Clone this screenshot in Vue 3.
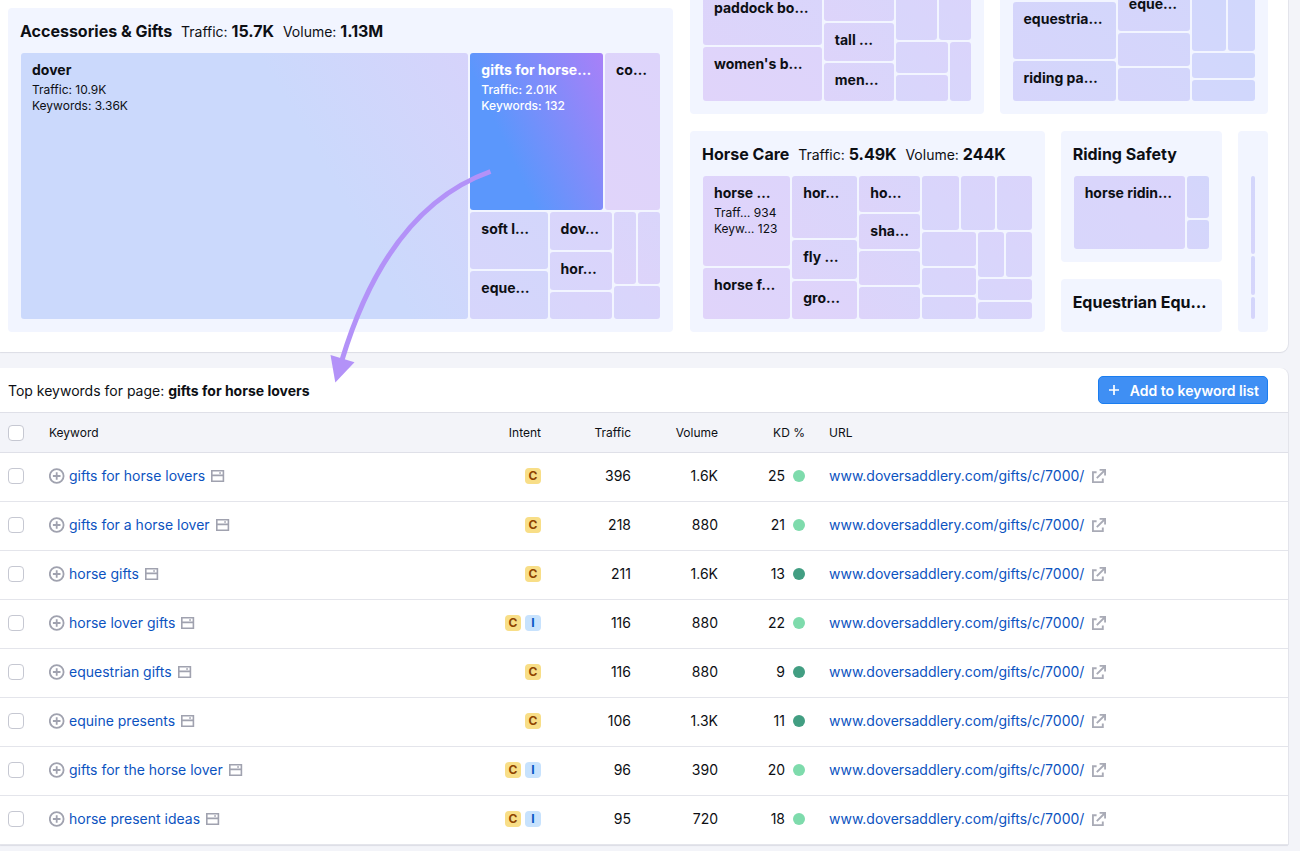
<script setup>
import { h } from 'vue'

// Treemap nodes: [size, tile] where size is the share of the parent's main axis.
const t = (size, tone = 'mid', label = '', stats = []) => ({ size, tone, label, stats })
const row = (size, ...children) => ({ size, dir: 'row', children })
const col = (size, ...children) => ({ size, dir: 'col', children })

const TreeNode = ({ node }) => {
  const style = { flexGrow: node.size }
  if (node.children) {
    return h('div', { class: ['tree-split', node.dir], style }, node.children.map((n) => h(TreeNode, { node: n })))
  }
  return h('div', { class: ['tree-tile', node.tone], style }, [
    node.label ? h('strong', { class: 'tree-label' }, node.label) : null,
    ...node.stats.map((s) => h('span', { class: 'tree-stat' }, s)),
  ])
}
TreeNode.props = ['node']

const accessories = row(1,
  t(448, 'dover', 'dover', ['Traffic: 10.9K', 'Keywords: 3.36K']),
  col(190,
    row(157,
      t(133, 'active', 'gifts for horse…', ['Traffic: 2.01K', 'Keywords: 132']),
      t(55, 'pink', 'co…')),
    row(107,
      col(77, t(57, 'cool', 'soft l…'), t(48, 'cool', 'eque…')),
      col(62, t(38, 'mid', 'dov…'), t(37, 'mid', 'hor…'), t(27)),
      col(46, row(72, t(22, 'warm'), t(22, 'warm')), t(33)))))

const boots = row(1,
  col(119, t(2, 'warm'), t(54, 'warm', 'paddock bo…'), t(54, 'pink', 'women\'s b…')),
  col(70, t(34, 'warm'), t(38, 'warm', 'tall …'), t(38, 'warm', 'men…')),
  col(75,
    row(53, t(41), t(31)),
    row(59, col(52, t(31), t(26)), t(20))))

const apparel = row(1,
  col(104, t(13), t(57, 'cool', 'equestria…'), t(40, 'cool', 'riding pa…')),
  col(73, t(44, 'cool', 'eque…'), t(33, 'cool'), t(33, 'cool')),
  col(63, row(64, t(34, 'ice'), t(27, 'ice')), t(25, 'ice'), t(21, 'ice')))

const care = row(1,
  col(87, t(90, 'pink', 'horse …', ['Traff… 934', 'Keyw… 123']), t(51, 'pink', 'horse f…')),
  col(65, t(62, 'warm', 'hor…'), t(39, 'warm', 'fly …'), t(38, 'pink', 'gro…')),
  col(61, t(36, 'warm', 'ho…'), t(35, 'warm', 'sha…'), t(34, 'warm'), t(32, 'warm')),
  col(109,
    row(54, t(36), t(34), t(34)),
    row(87,
      col(53, t(34), t(27), t(22)),
      col(53, row(45, t(26), t(25)), t(21), t(17)))))

const safety = row(1, t(111, 'mid', 'horse ridin…'), col(22, t(43, 'cool'), t(29, 'cool')))
const misc = col(1, t(78, 'cool'), t(39, 'cool'), t(22, 'cool'))

const url = 'www.doversaddlery.com/gifts/c/7000/'
const keywords = [
  { name: 'gifts for horse lovers', intent: ['C'], traffic: 396, volume: '1.6K', kd: 25 },
  { name: 'gifts for a horse lover', intent: ['C'], traffic: 218, volume: '880', kd: 21 },
  { name: 'horse gifts', intent: ['C'], traffic: 211, volume: '1.6K', kd: 13 },
  { name: 'horse lover gifts', intent: ['C', 'I'], traffic: 116, volume: '880', kd: 22 },
  { name: 'equestrian gifts', intent: ['C'], traffic: 116, volume: '880', kd: 9 },
  { name: 'equine presents', intent: ['C'], traffic: 106, volume: '1.3K', kd: 11 },
  { name: 'gifts for the horse lover', intent: ['C', 'I'], traffic: 96, volume: '390', kd: 20 },
  { name: 'horse present ideas', intent: ['C', 'I'], traffic: 95, volume: '720', kd: 18 },
]
</script>

<template>
  <main class="page">
    <section class="panel map">
      <article class="group lead">
        <h2>Accessories &amp; Gifts <span>Traffic: <b>15.7K</b></span> <span>Volume: <b>1.13M</b></span></h2>
        <div class="tree"><TreeNode :node="accessories" /></div>
      </article>
      <div class="side">
        <div class="band upper">
          <article class="group"><div class="tree"><TreeNode :node="boots" /></div></article>
          <article class="group"><div class="tree"><TreeNode :node="apparel" /></div></article>
        </div>
        <div class="band lower">
          <article class="group">
            <h2>Horse Care <span>Traffic: <b>5.49K</b></span> <span>Volume: <b>244K</b></span></h2>
            <div class="tree"><TreeNode :node="care" /></div>
          </article>
          <div class="stack">
            <article class="group safety">
              <h2>Riding Safety</h2>
              <div class="tree"><TreeNode :node="safety" /></div>
            </article>
            <article class="group closed"><h2>Equestrian Equ…</h2></article>
          </div>
          <article class="group sliver"><div class="tree"><TreeNode :node="misc" /></div></article>
        </div>
      </div>
    </section>

    <section class="panel list">
      <header class="bar">
        <p>Top keywords for page: <b>gifts for horse lovers</b></p>
        <button type="button" class="add">
          <svg width="12" height="12" viewBox="0 0 12 12" aria-hidden="true"><path d="M6 1v10M1 6h10" stroke="#fff" stroke-width="1.7" /></svg>
          Add to keyword list
        </button>
      </header>
      <table>
        <colgroup>
          <col class="c-check"><col><col class="c-intent"><col class="c-traffic"><col class="c-num"><col class="c-num"><col class="c-url">
        </colgroup>
        <thead>
          <tr>
            <th class="check"><input type="checkbox" aria-label="Select all keywords"></th>
            <th>Keyword</th>
            <th class="num">Intent</th>
            <th class="num">Traffic</th>
            <th class="num">Volume</th>
            <th class="num">KD %</th>
            <th>URL</th>
          </tr>
        </thead>
        <tbody>
          <tr v-for="k in keywords" :key="k.name">
            <td class="check"><input type="checkbox" :aria-label="'Select ' + k.name"></td>
            <td>
              <div class="cell">
                <svg width="16" height="16" viewBox="0 0 16 16" fill="none" stroke="#a0a2af" stroke-width="1.8" aria-hidden="true">
                  <circle cx="7.7" cy="8" r="6.9" /><path d="M7.7 4.2v7.6M3.9 8h7.6" />
                </svg>
                <a class="kw" href="#">{{ k.name }}</a>
                <svg width="14" height="12" viewBox="0 0 14 12" fill="none" stroke="#a0a2af" stroke-width="1.6" aria-hidden="true">
                  <path d="M.8 .8h11.6v10.4H.8zM.8 5.4h11.6" /><path d="M8.2 3h1.7" stroke-width="1.4" />
                </svg>
              </div>
            </td>
            <td>
              <div class="cell end">
                <span v-for="i in k.intent" :key="i" class="intent" :class="i">{{ i }}</span>
              </div>
            </td>
            <td class="num">{{ k.traffic }}</td>
            <td class="num">{{ k.volume }}</td>
            <td>
              <div class="cell end kd">{{ k.kd }}<i class="dot" :class="{ easy: k.kd < 15 }"></i></div>
            </td>
            <td>
              <div class="cell link">
                <a href="#">{{ url }}</a>
                <svg width="14" height="14" viewBox="0 0 14 14" fill="none" stroke="#a9abb6" stroke-width="1.9" aria-hidden="true">
                  <path d="M4.6 3.2H.9v9.9h9.9V9.4M7.6 .9h5.5v5.5M13 1 4.8 9.2" />
                </svg>
              </div>
            </td>
          </tr>
        </tbody>
      </table>
    </section>

    <svg class="arrow" width="170" height="220" viewBox="328 166 170 220" aria-hidden="true">
      <path d="M490.5 171.5Q388 208 342 360" fill="none" stroke="#b392f8" stroke-width="5" />
      <path d="M330.5 355 354.5 362.3 335.3 382.5z" fill="#b392f8" />
    </svg>
  </main>
</template>

<style>
body {
  margin: 0;
  background: #f3f4f9;
}

.tree-split {
  display: flex;
  flex: 1 1 0;
  gap: 2px;
  min-width: 0;
  min-height: 0;
}

.tree-split.col {
  flex-direction: column;
}

.tree-tile {
  display: flex;
  flex: 1 1 0;
  flex-direction: column;
  min-width: 0;
  min-height: 0;
  box-sizing: border-box;
  overflow: hidden;
  border-radius: 3px;
  white-space: nowrap;
}

.tree-label {
  padding: 8px 0 3px 11px;
  font-size: 14px;
  line-height: 18px;
  font-weight: 700;
}

.tree-stat {
  padding-left: 11px;
  font-size: 12px;
  line-height: 16px;
}

.tree-tile.dover { background: linear-gradient(60deg, #cbd9fc 65%, #d6d3fb); }
.tree-tile.ice { background: linear-gradient(45deg, #d3d7fc, #d0d7fc); }
.tree-tile.cool { background: linear-gradient(45deg, #d6d5fb, #d3d6fb); }
.tree-tile.mid { background: linear-gradient(45deg, #d8d6fb, #dad4fb); }
.tree-tile.warm { background: linear-gradient(45deg, #ddd4fa, #d9d5fb); }
.tree-tile.pink { background: linear-gradient(45deg, #e0d4fa, #ddd4fb); }

.tree-tile.active {
  background: linear-gradient(65deg, #5b97fc 32%, #a880f8);
  color: #fff;
}

.tree-tile.active .tree-stat {
  font-weight: 500;
}
</style>

<style scoped>
.page {
  position: relative;
  min-height: 100vh;
  padding-right: 12px;
  overflow: hidden;
  box-sizing: border-box;
  color: #0d0f14;
  font-family: Inter, "Liberation Sans", sans-serif;
}

.panel {
  background: #fff;
  box-shadow: 0 1px 1px #dcdde5, 1px 0 0 #e4e5ec;
}

.map {
  display: grid;
  grid-template-columns: minmax(0, 665fr) minmax(0, 578fr);
  gap: 17px;
  padding: 0 20px 20px 8px;
  border-radius: 0 0 8px 0;
}

.group {
  display: flex;
  flex-direction: column;
  box-sizing: border-box;
  min-width: 0;
  padding: 0 13px 13px;
  border-radius: 4px;
  background: #f2f5ff;
}

.tree {
  display: flex;
  flex: 1 1 auto;
}

h2 {
  margin: 0 -1px;
  padding: 12px 0 11px;
  font-size: 16px;
  line-height: 22px;
  font-weight: 700;
  white-space: nowrap;
}

h2 span {
  margin-left: 5px;
  font-size: 14px;
  line-height: 16px;
  font-weight: 400;
}

h2 b {
  font-size: 16px;
  font-weight: 700;
}

.lead {
  margin-top: 8px;
}

.side {
  display: flex;
  flex-direction: column;
  gap: 17px;
  min-width: 0;
}

.band {
  display: grid;
  gap: 16px;
}

.upper {
  grid-template-columns: minmax(0, 293fr) minmax(0, 268fr);
  height: 127px;
  margin-top: -13px;
}

.lower {
  grid-template-columns: minmax(0, 354fr) minmax(0, 161fr) minmax(0, 30fr);
  height: 201px;
}

.stack {
  display: flex;
  flex-direction: column;
  gap: 17px;
  min-width: 0;
}

.safety {
  flex: 1 1 auto;
}

.closed {
  height: 53px;
}

.sliver {
  padding-top: 45px;
}

.list {
  margin-top: 16px;
  border-radius: 0 8px 0 0;
}

.bar {
  display: flex;
  align-items: center;
  justify-content: space-between;
  height: 44px;
  padding: 0 20px 0 8px;
}

.bar p {
  margin: 0;
  font-size: 14px;
}

.bar b {
  font-weight: 700;
}

.add {
  display: flex;
  align-items: center;
  gap: 10px;
  height: 28px;
  padding: 0 8px 0 9px;
  border: 1px solid #1a7df0;
  border-radius: 5px;
  background: #3f8ff4;
  color: #fff;
  font: 600 14px Inter, sans-serif;
}

table {
  width: 100%;
  table-layout: fixed;
  border-collapse: separate;
  border-spacing: 0;
  font-size: 14px;
}

.c-check { width: 37px; }
.c-intent { width: 64px; }
.c-traffic { width: 90px; }
.c-num { width: 87px; }
.c-url { width: 471px; }

th {
  height: 39px;
  padding: 0 12px;
  border-top: 1px solid #dfe0e8;
  border-bottom: 1px solid #dfe0e8;
  background: #f3f4f9;
  font-size: 12px;
  font-weight: 400;
  text-align: left;
}

td {
  height: 45px;
  padding: 0 12px 3px;
  border-bottom: 1px solid #e4e5eb;
}

td, th {
  white-space: nowrap;
}

.check {
  padding-left: 8px;
  padding-right: 0;
}

.num {
  text-align: right;
}

input {
  display: block;
  width: 16px;
  height: 16px;
  margin: 0;
  appearance: none;
  border: 1px solid #c6c8d2;
  border-radius: 4px;
  background: #fff;
}

.cell {
  display: flex;
  align-items: center;
  gap: 4px;
}

.end {
  justify-content: flex-end;
}

a {
  color: #0c53bf;
  text-decoration: none;
}

.kw {
  padding-right: 2px;
}

.link {
  gap: 8px;
}

.intent {
  width: 16px;
  border-radius: 4px;
  font-size: 12px;
  line-height: 16px;
  font-weight: 700;
  text-align: center;
}

.C {
  background: #f8de87;
  color: #8e4400;
}

.I {
  background: #c7e2fd;
  color: #0956c4;
}

.kd {
  gap: 8px;
}

.dot {
  width: 12px;
  height: 12px;
  border-radius: 50%;
  background: #7edbac;
}

.dot.easy {
  background: #429e82;
}

.arrow {
  position: absolute;
  top: 166px;
  left: 328px;
}
</style>
